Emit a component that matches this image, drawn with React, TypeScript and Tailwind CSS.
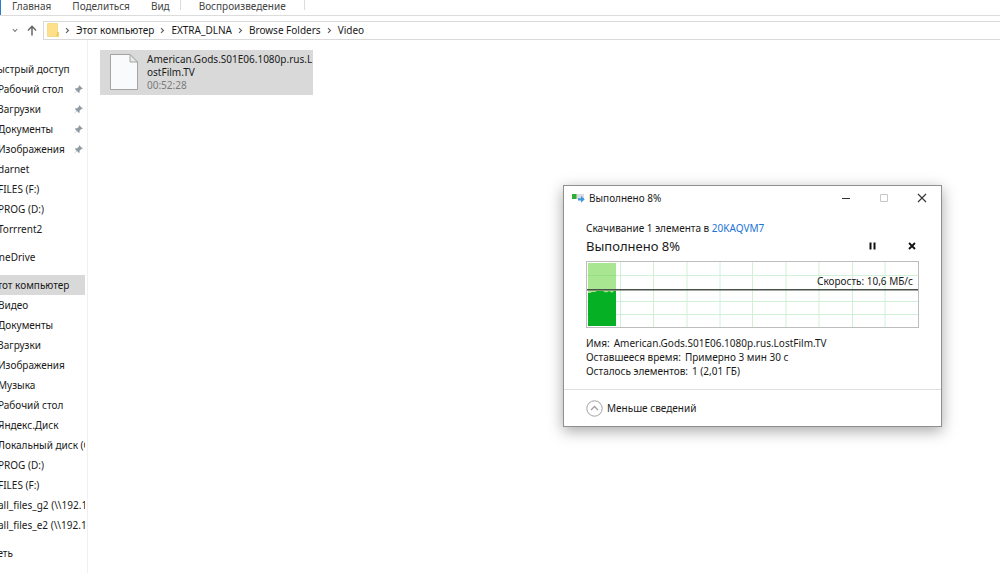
import { Fragment } from "react";
import cx from "clsx";

interface NavItem {
  label: string;
  pinned?: boolean;
}

interface NavGroup {
  title: string;
  active?: boolean;
  items: NavItem[];
}

const TABS = ["Главная", "Поделиться", "Вид"];

const CRUMBS = ["Этот компьютер", "EXTRA_DLNA", "Browse Folders", "Video"];

const GROUPS: NavGroup[] = [
  {
    title: "Быстрый доступ",
    items: [
      { label: "Рабочий стол", pinned: true },
      { label: "Загрузки", pinned: true },
      { label: "Документы", pinned: true },
      { label: "Изображения", pinned: true },
      { label: "darnet" },
      { label: "FILES (F:)" },
      { label: "PROG (D:)" },
      { label: "Torrrent2" },
    ],
  },
  { title: "OneDrive", items: [] },
  {
    title: "Этот компьютер",
    active: true,
    items: [
      { label: "Видео" },
      { label: "Документы" },
      { label: "Загрузки" },
      { label: "Изображения" },
      { label: "Музыка" },
      { label: "Рабочий стол" },
      { label: "Яндекс.Диск" },
      { label: "Локальный диск (C:)" },
      { label: "PROG (D:)" },
      { label: "FILES (F:)" },
      { label: "all_files_g2 (\\\\192.168.1.2)" },
      { label: "all_files_e2 (\\\\192.168.1.2)" },
    ],
  },
  { title: "Сеть", items: [] },
];

const DETAILS = [
  { name: "Имя:", value: "American.Gods.S01E06.1080p.rus.LostFilm.TV" },
  { name: "Оставшееся время:", value: "Примерно 3 мин 30 с" },
  { name: "Осталось элементов:", value: "1 (2,01 ГБ)" },
];

const PinIcon = () => (
  <svg width="9" height="9" viewBox="0 0 9 9" fill="#8f9ba3">
    <path d="M5.3 0.2 8.8 3.7 8 4.3 7.3 4.1 5.6 5.8 5.6 7.4 4.9 8 3 6.1 0.4 8.6 0.2 8.4 2.6 5.7 0.9 4 1.6 3.3 3.2 3.3 4.9 1.7 4.7 0.9Z" />
  </svg>
);

const CrumbArrow = () => (
  <svg width="5" height="7" viewBox="0 0 5 7" fill="none" stroke="#5a5a5a" strokeWidth="1.1">
    <path d="M1 1.2 3.5 3.5 1 5.8" />
  </svg>
);

const FolderIcon = () => (
  <svg width="12" height="14" viewBox="0 0 12 14">
    <path d="M0.5 0.5H10.5V9H11.5V13.5H0.5Z" fill="#ffe08a" />
    <path d="M10 9H11.7V13.5H9.3Z" fill="#f4c64f" />
    <path d="M0.5 0.5V13.5H11.5V9.2H10.5V0.5Z" fill="none" stroke="#f3d272" strokeWidth="0.7" />
  </svg>
);

const FileIcon = () => (
  <svg width="28" height="36" viewBox="0 0 28 36">
    <path d="M0.5 0.5H20L27.5 8V35.5H0.5Z" fill="#f9fafb" stroke="#a3a3a3" />
    <path d="M20 0.5V8H27.5Z" fill="#e6e8e9" stroke="#a3a3a3" strokeLinejoin="round" />
  </svg>
);

const CopyIcon = () => (
  <svg width="13" height="10" viewBox="0 0 13 10">
    <rect x="4" y="1" width="8" height="5" fill="#d9dde0" />
    <rect x="0" y="1" width="4.5" height="5" fill="#2fae35" />
    <path d="M6 5.3H9V3L12.7 6.3 9 9.7V7.4H6Z" fill="#3f95df" />
  </svg>
);

const SpeedChart = () => (
  <svg
    className="block h-[67px] w-full border border-[#bdbdbd] bg-white"
    viewBox="0 0 331 65"
    preserveAspectRatio="none"
    role="img"
    aria-label="График скорости"
  >
    <path
      d="M33.5 0V65M66.5 0V65M100 0V65M133 0V65M165.5 0V65M199 0V65M232 0V65M265.5 0V65M298 0V65M0 13.5H331M0 39.5H331M0 52.5H331"
      stroke="#d0f0d8"
      fill="none"
    />
    <rect x="1" y="1" width="28" height="63" fill="#a8e692" />
    <path d="M1 13.5H29" stroke="#97df85" />
    <path d="M1 31H3L5 30H8L10 29H16L18 30.3H20L22 29L25 30.8 27 29H29V64H1Z" fill="#06b025" />
    <path d="M0 27.7H331" stroke="#4a504a" strokeWidth="1.4" />
  </svg>
);

function Ribbon() {
  return (
    <div className="flex h-4 items-start overflow-hidden border-b border-[#dcdcdc] text-[#444]">
      <span className="h-4 w-px bg-[#2b7cc9]" />
      <div className="ml-[11px] flex gap-[21px]">
        {TABS.map((tab) => (
          <button key={tab} type="button" className="h-3">
            {tab}
          </button>
        ))}
      </div>
      <span className="ml-[10px] h-[10px] w-px bg-[#dcdcdc]" />
      <button type="button" className="ml-[18px] h-3">
        Воспроизведение
      </button>
      <span className="ml-[18px] h-[10px] w-px bg-[#dcdcdc]" />
    </div>
  );
}

function AddressBar() {
  return (
    <div className="mt-[5px] flex h-[19px] items-center">
      <button type="button" aria-label="Последние расположения" className="ml-3">
        <svg width="6" height="5" viewBox="0 0 6 5" fill="none" stroke="#777" strokeWidth="1.1">
          <path d="M0.8 1 3 3.4 5.2 1" />
        </svg>
      </button>
      <button type="button" aria-label="Вверх" className="ml-2">
        <svg width="12" height="11" viewBox="0 0 12 11" fill="none" stroke="#666" strokeWidth="1.5">
          <path d="M6 10.5V1.5M2 5.5 6 1.3 10 5.5" />
        </svg>
      </button>
      <nav className="ml-[5px] flex h-full flex-1 items-center border border-r-0 border-[#d9d9d9] pb-px pl-[3px]">
        <FolderIcon />
        {CRUMBS.map((crumb) => (
          <Fragment key={crumb}>
            <span className="flex w-[17px] justify-center">
              <CrumbArrow />
            </span>
            <a href="#">{crumb}</a>
          </Fragment>
        ))}
      </nav>
    </div>
  );
}

function Sidebar() {
  return (
    <aside className="flex w-[88px] shrink-0 flex-col gap-2 overflow-hidden border-r border-[#f0f0f0] pt-[19px] whitespace-nowrap">
      {GROUPS.map((group) => (
        <div key={group.title} className="w-[85px] overflow-hidden">
          <div className={cx("flex h-5 items-center", { "bg-[#d9d9d9]": group.active })}>
            <a href="#" className="-ml-[9px]">
              {group.title}
            </a>
          </div>
          <ul>
            {group.items.map((item) => (
              <li key={item.label} className="flex h-5 items-center justify-between">
                <a href="#" className="-ml-[2px]">
                  {item.label}
                </a>
                {item.pinned && (
                  <span className="mr-[2px]">
                    <PinIcon />
                  </span>
                )}
              </li>
            ))}
          </ul>
        </div>
      ))}
    </aside>
  );
}

function CopyDialog() {
  return (
    <section
      role="dialog"
      aria-label="Выполнено 8%"
      className="absolute top-[185px] left-[563px] w-[379px] border border-[#8f8f8f] bg-white shadow-[0_4px_14px_rgba(0,0,0,0.35)]"
    >
      <header className="flex h-6 items-center pl-2">
        <CopyIcon />
        <span className="ml-1 flex-1">Выполнено 8%</span>
        <button type="button" aria-label="Свернуть" className="flex w-[38px] justify-center">
          <svg width="10" height="10" viewBox="0 0 10 10" stroke="#333">
            <path d="M1 5.5H9" />
          </svg>
        </button>
        <button type="button" aria-label="Развернуть" disabled className="flex w-[38px] justify-center">
          <svg width="10" height="10" viewBox="0 0 10 10" fill="none" stroke="#c8c8c8">
            <path d="M1.5 1.5H8.5V8.5H1.5Z" />
          </svg>
        </button>
        <button type="button" aria-label="Закрыть" className="flex w-[38px] justify-center">
          <svg width="10" height="10" viewBox="0 0 10 10" stroke="#333" strokeWidth="1.1">
            <path d="M1 1 9 9M9 1 1 9" />
          </svg>
        </button>
      </header>

      <div className="px-[22px] pt-[11px] pb-[11px]">
        <p className="leading-[14px]">
          Скачивание 1 элемента в{" "}
          <a href="#" className="text-[#1a73d9]">
            20KAQVM7
          </a>
        </p>
        <div className="mt-px mb-[5px] flex h-5 items-center">
          <h1 className="flex-1 text-[13px]">Выполнено 8%</h1>
          <button type="button" aria-label="Пауза" className="mr-8">
            <svg width="7" height="8" viewBox="0 0 7 8" fill="#111">
              <path d="M0.5 0.5H2.5V7.5H0.5ZM4.5 0.5H6.5V7.5H4.5Z" />
            </svg>
          </button>
          <button type="button" aria-label="Отмена" className="mr-[3px]">
            <svg width="8" height="8" viewBox="0 0 8 8" stroke="#111" strokeWidth="1.8">
              <path d="M1 1 7 7M7 1 1 7" />
            </svg>
          </button>
        </div>
        <div className="relative">
          <SpeedChart />
          <span className="absolute top-[14px] right-[6px]">Скорость: 10,6 МБ/с</span>
        </div>
        <dl className="mt-2 leading-[14px]">
          {DETAILS.map((row) => (
            <div key={row.name} className="flex gap-1">
              <dt>{row.name}</dt>
              <dd>{row.value}</dd>
            </div>
          ))}
        </dl>
      </div>

      <footer className="flex h-[37px] items-center border-t border-[#dfdfdf] pl-[22px]">
        <button type="button" className="flex items-center gap-1">
          <svg width="17" height="17" viewBox="0 0 17 17" fill="none" stroke="#a0a0a0">
            <circle cx="8.5" cy="8.5" r="7.7" />
            <path d="M5 10 8.5 6.5 12 10" strokeWidth="1.3" />
          </svg>
          Меньше сведений
        </button>
      </footer>
    </section>
  );
}

export default function App() {
  return (
    <div className="relative flex min-h-screen flex-col overflow-hidden bg-white font-['Noto_Sans','Open_Sans',sans-serif] text-[10px] leading-3 text-[#1a1a1a]">
      <Ribbon />
      <AddressBar />
      <div className="flex flex-1">
        <Sidebar />
        <main className="flex-1 pt-[10px] pl-3">
          <button type="button" className="flex w-[213px] items-start bg-[#d9d9d9] pt-[3px] pb-[3px] pl-[10px] text-left">
            <span className="pt-px">
              <FileIcon />
            </span>
            <span className="ml-[9px] w-[166px] shrink-0 leading-[13px] break-all">
              American.Gods.S01E06.1080p.rus.LostFilm.TV
              <span className="block text-[#7a7a7a]">00:52:28</span>
            </span>
          </button>
        </main>
      </div>
      <CopyDialog />
    </div>
  );
}
